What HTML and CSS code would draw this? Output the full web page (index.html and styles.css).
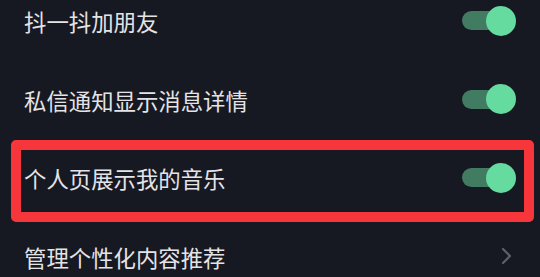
FILE: index.html
```html
<!DOCTYPE html>
<html lang="zh-CN">
<head>
<meta charset="utf-8">
<link rel="stylesheet" href="styles.css">
</head>
<body>
<div class="list">
  <div class="row">
    <span class="label">抖一抖加朋友</span>
    <span class="toggle"><span class="track"></span><span class="knob"></span></span>
  </div>
  <div class="row">
    <span class="label">私信通知显示消息详情</span>
    <span class="toggle"><span class="track"></span><span class="knob"></span></span>
  </div>
  <div class="row highlight">
    <span class="label">个人页展示我的音乐</span>
    <span class="toggle"><span class="track"></span><span class="knob"></span></span>
  </div>
  <div class="row">
    <span class="label">管理个性化内容推荐</span>
    <svg class="chevron" width="11" height="18" viewBox="0 0 11 18"><polyline points="2,2 9,9 2,16" fill="none" stroke="#5f6169" stroke-width="2.2" stroke-linecap="round" stroke-linejoin="round"/></svg>
  </div>
</div>
</body>
</html>
```
FILE: styles.css
```css
html, body {
  margin: 0;
  padding: 0;
  background: #161822;
  width: 540px;
  height: 277px;
  overflow: hidden;
}
.list {
  margin-top: -18.75px;
  height: 295.75px;
  overflow: hidden;
  display: flex;
  flex-direction: column;
}
.row {
  position: relative;
  flex: none;
  height: 78.5px;
  display: flex;
  align-items: center;
  justify-content: space-between;
  padding: 0 24px 0 24px;
  font-family: "Noto Sans CJK SC", "Noto Sans", sans-serif;
  font-size: 22.4px;
  color: #e4e4e7;
}
.label {
  line-height: 1;
  position: relative;
  top: 1px;
}
.highlight::after {
  content: "";
  position: absolute;
  left: 11px;
  right: 6px;
  top: 1.75px;
  bottom: -5.25px;
  border: 10px solid #f6363b;
  border-radius: 5px;
}
.toggle {
  position: relative;
  width: 54px;
  height: 30px;
  display: flex;
  align-items: center;
}
.track {
  width: 46px;
  height: 19px;
  border-radius: 10px;
  background: #417c62;
}
.knob {
  position: absolute;
  right: 0;
  top: 0;
  width: 30px;
  height: 30px;
  border-radius: 50%;
  background: #65dba0;
}
.chevron {
  margin-right: 4px;
}
```
